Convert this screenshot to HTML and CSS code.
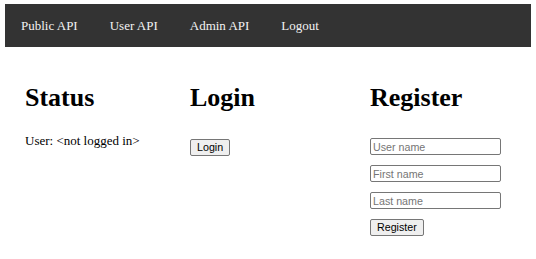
FILE: index.html
```html
<!DOCTYPE html>
<html lang="en">
<head>
<meta charset="utf-8">
<title>API Demo</title>
<link rel="stylesheet" href="styles.css">
</head>
<body>
<nav class="topnav">
  <a href="#" class="nav-link">Public API</a>
  <a href="#" class="nav-link">User API</a>
  <a href="#" class="nav-link">Admin API</a>
  <a href="#" class="nav-link">Logout</a>
</nav>
<main class="panels">
  <section class="panel">
    <h1 class="panel-title">Status</h1>
    <p class="status-text">User: &lt;not logged in&gt;</p>
  </section>
  <section class="panel">
    <h1 class="panel-title">Login</h1>
    <form class="login-form">
      <button type="button" class="btn">Login</button>
    </form>
  </section>
  <section class="panel">
    <h1 class="panel-title">Register</h1>
    <form class="register-form">
      <input class="field" type="text" placeholder="User name">
      <input class="field" type="text" placeholder="First name">
      <input class="field" type="text" placeholder="Last name">
      <div class="form-actions">
        <button type="button" class="btn">Register</button>
      </div>
    </form>
  </section>
</main>
</body>
</html>
```

FILE: styles.css
```css
html, body {
  margin: 0;
  background: #ffffff;
}

body {
  padding: 4px 5px;
  font-family: "Liberation Serif", "Times New Roman", serif;
  font-size: 13px;
  color: #000000;
}

.topnav {
  display: flex;
  background: #333333;
  padding: 14px 0;
}

.nav-link {
  display: block;
  padding: 0 16px;
  line-height: 15px;
  color: #f2f2f2;
  text-decoration: none;
  font-size: 13px;
}

.panels {
  display: grid;
  grid-template-columns: 165px 180px 1fr;
  margin-top: 36px;
  padding-left: 20px;
}

.panel-title {
  margin: 0 0 20px;
  font-size: 26px;
  line-height: 30px;
  font-weight: bold;
}

.status-text {
  margin: 0;
  line-height: 15px;
}

.login-form {
  padding-top: 6px;
}

.register-form {
  display: flex;
  flex-direction: column;
  align-items: flex-start;
  gap: 10px;
  padding-top: 5px;
}

.field {
  box-sizing: border-box;
  width: 131px;
  height: 17px;
  margin: 0;
  padding: 0 2px;
  border: 1px solid #767676;
  border-radius: 2px;
  font-family: "Liberation Sans", Arial, sans-serif;
  font-size: 10.7px;
  color: #000;
  background: #fff;
}

.field::placeholder {
  color: #757575;
}

.form-actions {
  display: flex;
}

.btn {
  box-sizing: border-box;
  height: 17px;
  margin: 0;
  padding: 0 6px;
  border: 1px solid #767676;
  border-radius: 2px;
  background: #efefef;
  font-family: "Liberation Sans", Arial, sans-serif;
  font-size: 10.7px;
  line-height: 13px;
  color: #000;
}
```
